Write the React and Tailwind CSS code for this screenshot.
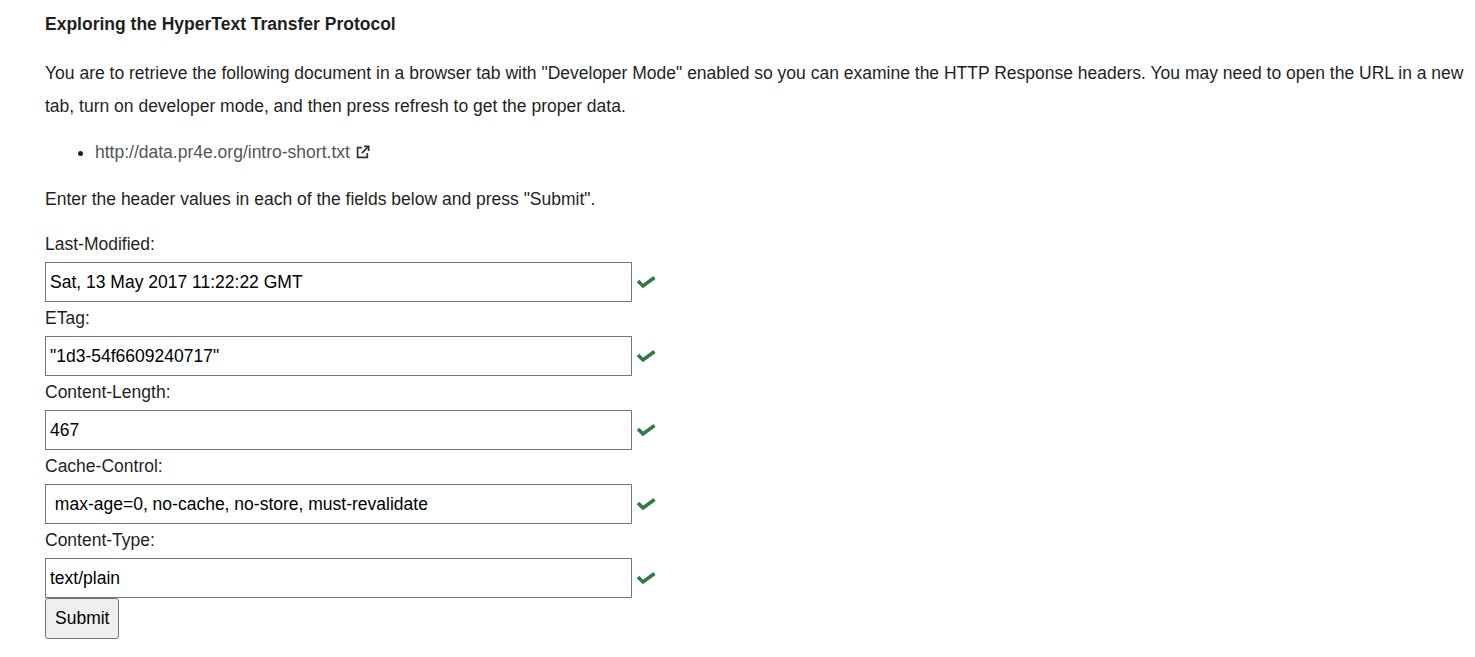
import React from "react";

const fields = [
  { label: "Last-Modified:", value: "Sat, 13 May 2017 11:22:22 GMT" },
  { label: "ETag:", value: '"1d3-54f6609240717"' },
  { label: "Content-Length:", value: "467" },
  { label: "Cache-Control:", value: " max-age=0, no-cache, no-store, must-revalidate" },
  { label: "Content-Type:", value: "text/plain" },
];

function Check() {
  return (
    <svg width="21" height="13" viewBox="0 0 21 13" className="ml-[4px] shrink-0">
      <polyline
        points="2,5 7,10 18.5,1.5"
        fill="none"
        stroke="#2f7a45"
        strokeWidth="3.6"
        strokeLinejoin="miter"
      />
    </svg>
  );
}

function ExtIcon() {
  return (
    <svg width="14" height="14" viewBox="0 0 13 13" className="inline-block ml-[6px] align-[-1px]">
      <path d="M10.5 7.5v4H1.5v-9h4" fill="none" stroke="#333" strokeWidth="1.6" />
      <path d="M7.5 1.2h4.3v4.3" fill="none" stroke="#333" strokeWidth="1.6" />
      <path d="M11.6 1.4L5.5 7.5" fill="none" stroke="#333" strokeWidth="1.6" />
    </svg>
  );
}

export default function App() {
  return (
    <div className="min-h-[657px] bg-white pl-[45px] pt-[12px] text-[17.5px] text-[#1f1f1f] font-['Liberation_Sans',Arial,sans-serif]">
      <h1 className="font-bold leading-6 mb-[21px]">Exploring the HyperText Transfer Protocol</h1>
      <p className="leading-[32.5px] mb-[18px]">
        You are to retrieve the following document in a browser tab with "Developer Mode" enabled so you can
        examine the HTTP Response headers. You may need to open the URL in a new tab, turn on developer mode,
        and then press refresh to get the proper data.
      </p>
      <ul className="list-disc pl-[50px] leading-6 mb-[19px]">
        <li>
          <a href="#" className="text-[#555]">http://data.pr4e.org/intro-short.txt</a>
          <ExtIcon />
        </li>
      </ul>
      <p className="leading-[32px] mb-[13px]">Enter the header values in each of the fields below and press "Submit".</p>
      <form onSubmit={(e) => e.preventDefault()}>
        {fields.map((f) => (
          <div key={f.label}>
            <label className="block leading-[30px] pt-[1px] mb-[3px]">{f.label}</label>
            <div className="flex items-center">
              <input
                type="text"
                defaultValue={f.value}
                className="w-[587px] h-[40px] border border-[#767676] pl-[4px] text-[17.5px] text-black bg-white outline-none"
              />
              <Check />
            </div>
          </div>
        ))}
        <button
          type="submit"
          className="h-[41px] px-[9px] border border-[#767676] rounded-[3px] bg-[#efefef] text-black text-[17.5px]"
        >
          Submit
        </button>
      </form>
    </div>
  );
}
